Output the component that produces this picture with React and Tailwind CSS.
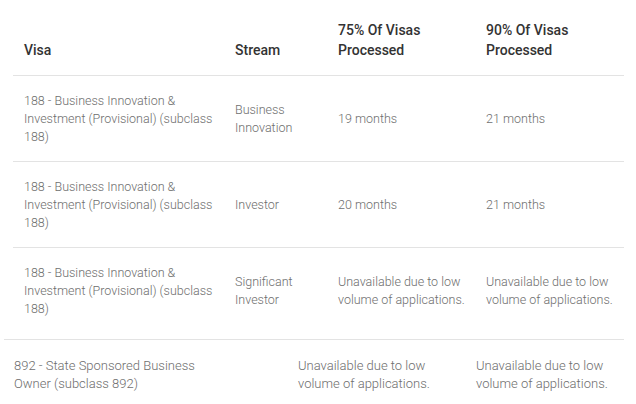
import React from "react";

const rows = [
  {
    visa: ["188 - Business Innovation &", "Investment (Provisional) (subclass", "188)"],
    stream: ["Business", "Innovation"],
    p75: ["19 months"],
    p90: ["21 months"],
  },
  {
    visa: ["188 - Business Innovation &", "Investment (Provisional) (subclass", "188)"],
    stream: ["Investor"],
    p75: ["20 months"],
    p90: ["21 months"],
  },
  {
    visa: ["188 - Business Innovation &", "Investment (Provisional) (subclass", "188)"],
    stream: ["Significant", "Investor"],
    p75: ["Unavailable due to low", "volume of applications."],
    p90: ["Unavailable due to low", "volume of applications."],
  },
];

const Lines = ({ lines }) =>
  lines.map((line, i) => (
    <span key={i} className="block whitespace-nowrap">
      {line}
    </span>
  ));

const App = () => {
  return (
    <div
      className="bg-white w-[636px] h-[404px] overflow-hidden pt-1"
      style={{ fontFamily: "Roboto, 'Liberation Sans', sans-serif" }}
    >
      <div className="ml-[13px] w-[611px] mb-[5px]">
        <div className="grid grid-cols-[211px_103px_148px_149px] h-[72px] pb-[15px] border-b border-[#e3e3e3] text-[14px] leading-[20px] font-medium text-[#333]">
          <div className="pl-[11px] flex flex-col justify-end">Visa</div>
          <div className="pl-[11px] flex flex-col justify-end">Stream</div>
          <div className="pl-[11px] flex flex-col justify-end">
            <Lines lines={["75% Of Visas", "Processed"]} />
          </div>
          <div className="pl-[11px] flex flex-col justify-end">
            <Lines lines={["90% Of Visas", "Processed"]} />
          </div>
        </div>

        {rows.map((row, index) => (
          <div
            key={index}
            className={
              "grid grid-cols-[211px_103px_148px_149px] h-[86px] text-[12.5px] leading-[18px] font-light text-[#6e6e6e] " +
              (index < rows.length - 1 ? "border-b border-[#e3e3e3]" : "")
            }
          >
            <div className="pl-[11px] flex flex-col justify-center">
              <Lines lines={row.visa} />
            </div>
            <div className="pl-[11px] flex flex-col justify-center">
              <Lines lines={row.stream} />
            </div>
            <div className="pl-[11px] flex flex-col justify-center">
              <Lines lines={row.p75} />
            </div>
            <div className="pl-[11px] flex flex-col justify-center">
              <Lines lines={row.p90} />
            </div>
          </div>
        ))}
      </div>

      <div className="ml-[4px] w-[620px] border-t border-[#e3e3e3] grid grid-cols-[294px_178px_148px] pt-[17px] text-[13px] leading-[18px] font-light text-[#6e6e6e]">
        <div className="pl-[10px]">
          <Lines lines={["892 - State Sponsored Business", "Owner (subclass 892)"]} />
        </div>
        <div>
          <Lines lines={["Unavailable due to low", "volume of applications."]} />
        </div>
        <div>
          <Lines lines={["Unavailable due to low", "volume of applications."]} />
        </div>
      </div>
    </div>
  );
};

export default App;
